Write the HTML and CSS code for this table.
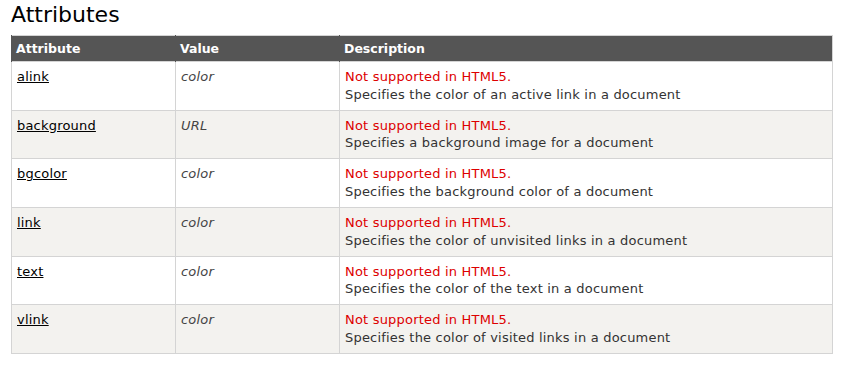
FILE: index.html
```html
<!DOCTYPE html>
<html lang="en">
<head>
    <meta charset="UTF-8">
    <title>Attributes</title>
    <link rel="stylesheet" href="styles.css">
</head>
<body>
    <h2>Attributes</h2>
    <table class="reference">
        <tr>
            <th class="col-attr">Attribute</th>
            <th class="col-value">Value</th>
            <th>Description</th>
        </tr>
        <tr>
            <td><a href="#">alink</a></td>
            <td><i>color</i></td>
            <td><span class="deprecated">Not supported in HTML5.</span><br>Specifies the color of an active link in a document</td>
        </tr>
        <tr>
            <td><a href="#">background</a></td>
            <td><i>URL</i></td>
            <td><span class="deprecated">Not supported in HTML5.</span><br>Specifies a background image for a document</td>
        </tr>
        <tr>
            <td><a href="#">bgcolor</a></td>
            <td><i>color</i></td>
            <td><span class="deprecated">Not supported in HTML5.</span><br>Specifies the background color of a document</td>
        </tr>
        <tr>
            <td><a href="#">link</a></td>
            <td><i>color</i></td>
            <td><span class="deprecated">Not supported in HTML5.</span><br>Specifies the color of unvisited links in a document</td>
        </tr>
        <tr>
            <td><a href="#">text</a></td>
            <td><i>color</i></td>
            <td><span class="deprecated">Not supported in HTML5.</span><br>Specifies the color of the text in a document</td>
        </tr>
        <tr>
            <td><a href="#">vlink</a></td>
            <td><i>color</i></td>
            <td><span class="deprecated">Not supported in HTML5.</span><br>Specifies the color of visited links in a document</td>
        </tr>
    </table>
</body>
</html>
```
FILE: styles.css
```css
body {
    font-family: "DejaVu Sans", Verdana, sans-serif;
    font-size: 13px;
    color: #333;
    background-color: #fff;
    margin: 0;
    padding: 0 9px 0 11px;
}
h2 {
    font-weight: normal;
    font-size: 22px;
    color: #000;
    margin: 0;
    padding: 2px 0 8px 0;
    line-height: 25px;
}
table.reference {
    width: 100%;
    border-collapse: collapse;
    border: 1px solid #d4d4d4;
}
table.reference th {
    background-color: #555;
    color: #fff;
    font-weight: bold;
    font-size: 12.5px;
    text-align: left;
    padding: 5px 4px 4px 4px;
    line-height: 16px;
    border-left: 1px solid #555;
}
.col-attr {
    width: 155px;
}
.col-value {
    width: 155px;
}
table.reference td {
    vertical-align: top;
    padding: 6px 5px 6px 5px;
    line-height: 17.83px;
    letter-spacing: 0.2px;
    border: 1px solid #d4d4d4;
}
table.reference tr:nth-child(odd) td {
    background-color: #f3f2ef;
}
table.reference a {
    color: #000;
    text-decoration: underline;
}
table.reference i {
    color: #444;
}
.deprecated {
    color: #dd0000;
}
```
